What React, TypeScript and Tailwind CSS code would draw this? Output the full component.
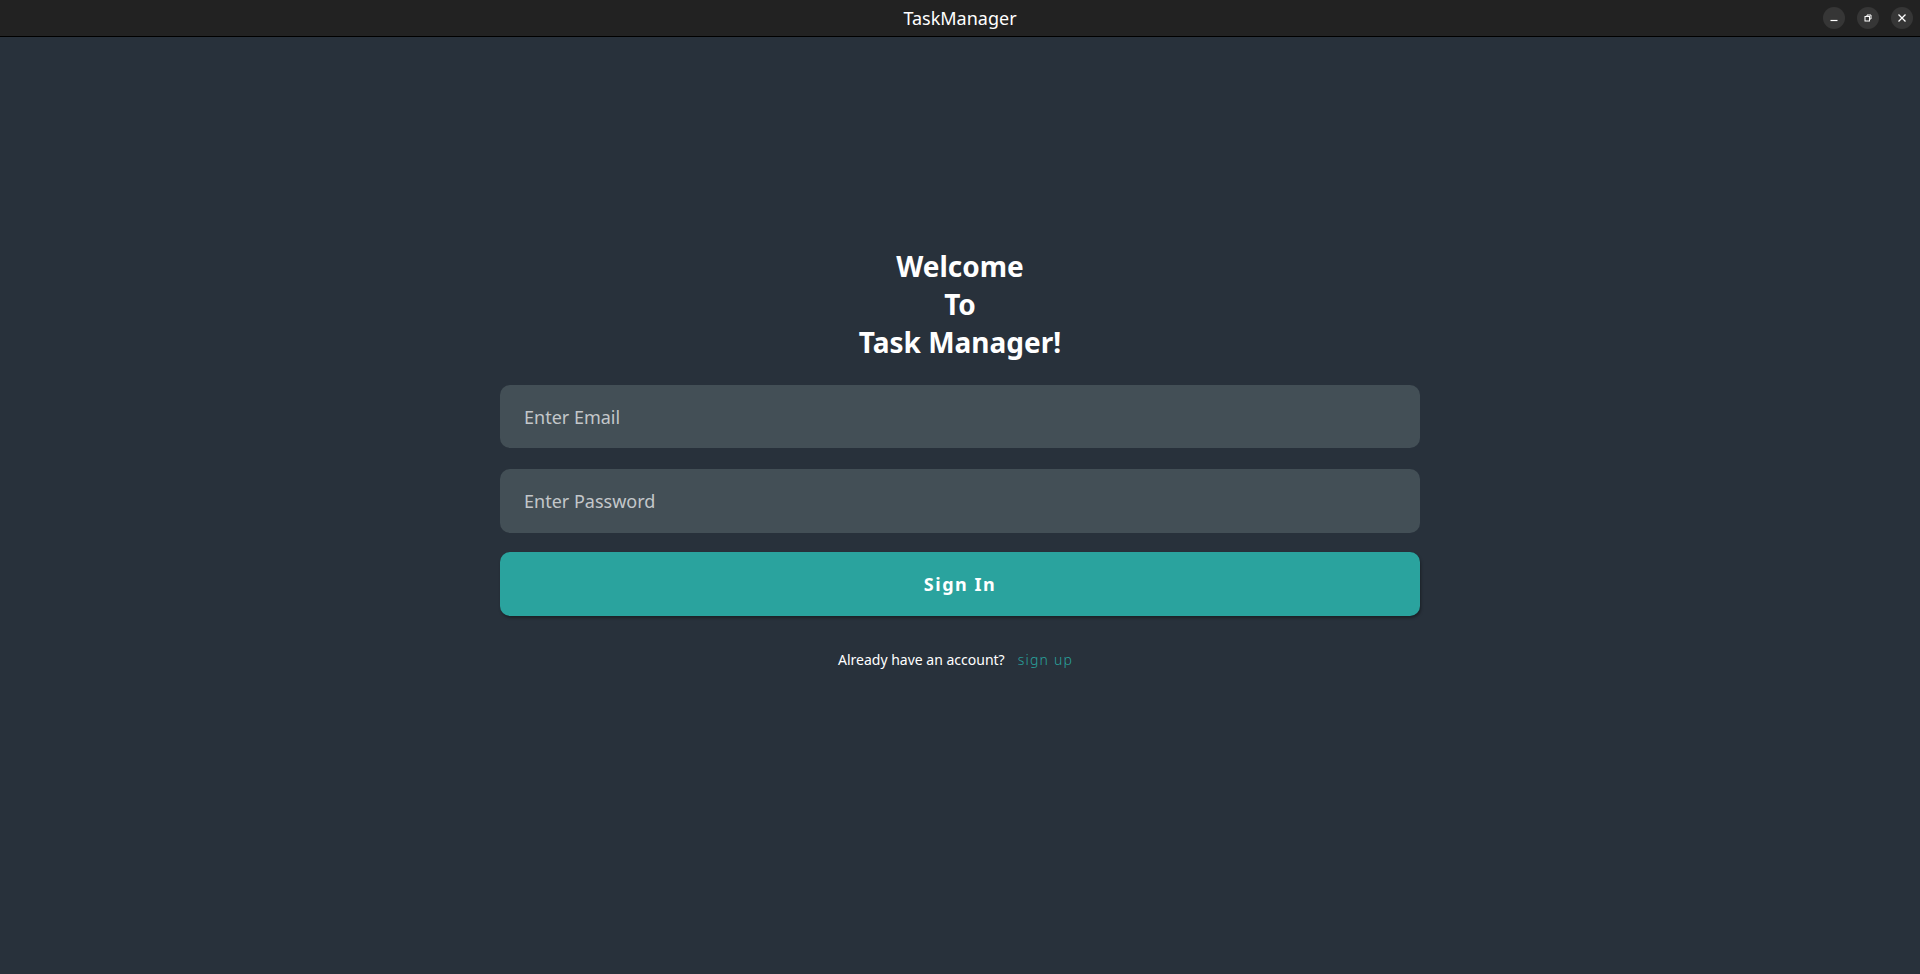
import { useState } from 'react';

function TitleBar() {
  return (
    <div className="relative flex h-[37px] items-center justify-center border-b border-black bg-[#222222]">
      <span className="text-[18px] text-white">TaskManager</span>
      <div className="absolute right-[7px] top-[7px] flex gap-[12px]">
        <button className="flex h-[22px] w-[22px] items-center justify-center rounded-full bg-[#363636]">
          <svg width="10" height="10" viewBox="0 0 10 10">
            <path d="M1.5 7.5h7" stroke="white" strokeWidth="1.2" />
          </svg>
        </button>
        <button className="flex h-[22px] w-[22px] items-center justify-center rounded-full bg-[#363636]">
          <svg width="10" height="10" viewBox="0 0 10 10" fill="none">
            <rect x="2" y="3.5" width="4.5" height="4.5" stroke="white" strokeWidth="1" />
            <path d="M4 3.5V2h4v4h-1.5" stroke="white" strokeWidth="1" />
          </svg>
        </button>
        <button className="flex h-[22px] w-[22px] items-center justify-center rounded-full bg-[#363636]">
          <svg width="10" height="10" viewBox="0 0 10 10">
            <path d="M1.5 1.5l7 7M8.5 1.5l-7 7" stroke="white" strokeWidth="1.3" />
          </svg>
        </button>
      </div>
    </div>
  );
}

export default function App() {
  const [email, setEmail] = useState('');
  const [password, setPassword] = useState('');

  return (
    <div className="flex h-[974px] flex-col bg-[#28313b] font-['Noto_Sans',sans-serif]">
      <TitleBar />

      {/* Login form */}
      <div className="flex flex-1 flex-col items-center pt-[210px]">
        <h1 className="text-center text-[28px] font-bold leading-[38px] text-white">
          Welcome
          <br />
          To
          <br />
          Task Manager!
        </h1>

        <form className="mt-6 flex w-[920px] flex-col" onSubmit={(e) => e.preventDefault()}>
          <input
            type="email"
            value={email}
            onChange={(e) => setEmail(e.target.value)}
            placeholder="Enter Email"
            className="h-[63px] w-full rounded-[10px] bg-[#434f56] px-6 text-[18px] text-white placeholder:text-[#c3c7ca] focus:outline-none"
          />
          <input
            type="password"
            value={password}
            onChange={(e) => setPassword(e.target.value)}
            placeholder="Enter Password"
            className="mt-[21px] h-[64px] w-full rounded-[10px] bg-[#434f56] px-6 text-[18px] text-white placeholder:text-[#c3c7ca] focus:outline-none"
          />
          <button
            type="submit"
            className="mt-[19px] h-[64px] w-full rounded-[10px] bg-[#2aa39e] text-[18px] font-bold tracking-[1.5px] text-white shadow-[1px_2px_3px_rgba(0,0,0,0.35)]"
          >
            Sign In
          </button>
        </form>

        <div className="mt-[34px] flex items-center gap-[13px] pr-[9px] text-[14px] leading-5">
          <span className="text-white">Already have an account?</span>
          <button className="font-light tracking-[1.2px] text-[#2aa39e]">sign up</button>
        </div>
      </div>
    </div>
  );
}
